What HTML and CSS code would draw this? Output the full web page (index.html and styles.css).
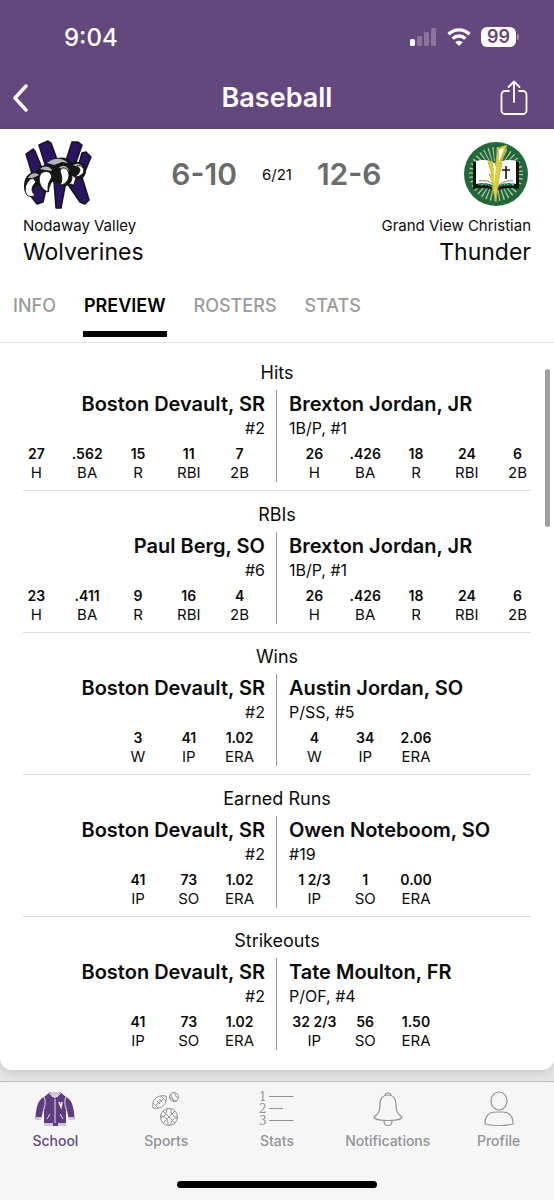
FILE: index.html
```
<!DOCTYPE html>
<html lang="en">
<head>
    <meta charset="UTF-8">
    <meta name="viewport" content="width=device-width, initial-scale=1.0">
    <title>Baseball</title>
    <link rel="stylesheet" href="styles.css">
</head>
<body>
    <header class="top">
        <div class="status">
            <span class="time">9:04</span>
            <div class="status-icons">
                <svg width="27" height="18" viewBox="0 0 27 18" fill="#fff">
                    <rect x="0" y="11" width="5" height="7" rx="1.5"/>
                    <g opacity=".25">
                        <rect x="7" y="8" width="5" height="10" rx="1.5"/>
                        <rect x="14" y="4" width="5" height="14" rx="1.5"/>
                        <rect x="21" y="0" width="5" height="18" rx="1.5"/>
                    </g>
                </svg>
                <svg width="24" height="18" viewBox="0 0 24 18">
                    <g fill="none" stroke="#fff" stroke-width="3.4">
                        <path d="M1.5 6.2a15 15 0 0 1 21 0"/>
                        <path d="M5.6 10.6a9.2 9.2 0 0 1 12.8 0"/>
                    </g>
                    <path fill="#fff" d="M12 18l-3.8-3.7a5.5 5.5 0 0 1 7.6 0z"/>
                </svg>
                <span class="battery">99</span>
            </div>
        </div>
        <div class="bar">
            <button class="icon-button" aria-label="Back">
                <svg width="17" height="28" viewBox="0 0 17 28" fill="none" stroke="#fff" stroke-width="3.4" stroke-linecap="round" stroke-linejoin="round"><path d="M14 2L3 14l11 12"/></svg>
            </button>
            <h1>Baseball</h1>
            <button class="icon-button" aria-label="Share">
                <svg width="28" height="36" viewBox="0 0 28 36" fill="none" stroke="#fff" stroke-width="1.8" stroke-linecap="round" stroke-linejoin="round"><path d="M9 11H5a3.5 3.5 0 0 0-3.5 3.5v16A3.5 3.5 0 0 0 5 34h18a3.5 3.5 0 0 0 3.5-3.5v-16A3.5 3.5 0 0 0 23 11h-4M14 22V1.5M8.5 7L14 1.5 19.5 7"/></svg>
            </button>
        </div>
    </header>

    <main>
        <div class="card">
            <div class="game">
                <div class="team">
                    <svg class="logo" viewBox="0 0 70 70" role="img" aria-label="Wolverines logo">
                        <g fill="#2b1460" stroke="#17131d" stroke-width="1.5" stroke-linejoin="round">
                            <path d="M3 15l7-5 2 2 8 20-10 6z"/>
                            <path d="M16 6l9-4 3 2 8 22-12 6z"/>
                            <path d="M49 3h6l4 3-7 20-11 2z"/>
                            <path d="M59 14l4-1 5 5-8 19-8 2z"/>
                            <path d="M9 46h15l-4 17-6 2-7-9z"/>
                            <path d="M31 42h12l-5 27h-5z"/>
                            <path d="M44 44l14-9 8 26-4 4-5-2z"/>
                        </g>
                        <path d="M1 47c0-8 4-14 12-14 2-5 6-7 10-7 7-8 20-11 26-2 7-3 14 0 14 8 0 5-4 9-9 8l-4-3-3 8c-3 3-8 3-11-1l-7-1c-2 3-3 7-3 10-5 0-9-3-11-7-3 2-5 4-5 8l-4 3c-4-2-5-6-5-10z" fill="#151517"/>
                        <path d="M24 24c6-5 15-6 21 0l-6-1-8 3zM5 39c2-5 8-6 11-3l-6 3zM17 30c4-4 11-3 12 2l-7-1zM36 29c4-5 10-1 10 4l-5-3zM50 26c5-3 10 0 11 5l-6-3z" fill="#b3b3b7"/>
                        <g fill="#fff" stroke="#151515" stroke-width="1">
                            <path d="M10 39C3 41 0 51 4 56c2 2 6 2 8 0-5-4-3-9 1-13z"/>
                            <path d="M20 33c-6 3-5 16 5 20 0-6 0-9 3-13 2-5-2-9-8-7z"/>
                            <path d="M38 30c-3 3 4 8-1 16 7 0 11-8 8-14-2-3-5-4-7-2z"/>
                            <path d="M54 27c5 3 3 7-2 11 6 0 11-5 8-9-1-2-4-3-6-2z"/>
                            <path d="M49 36c0 5-1 8-4 10l4-1 1 3 3-9z"/>
                        </g>
                    </svg>
                    <span class="school">Nodaway Valley</span>
                    <span class="mascot">Wolverines</span>
                </div>
                <div class="records">
                    <strong>6-10</strong>
                    <span>6/21</span>
                    <strong>12-6</strong>
                </div>
                <div class="team away">
                    <svg class="logo" viewBox="0 0 70 70" role="img" aria-label="Thunder logo">
                        <circle cx="35" cy="35" r="32" fill="#22683a"/>
                        <circle cx="35" cy="35" r="20" fill="none" stroke="#b5cda8" stroke-width="14" stroke-dasharray="1 2.49"/>
                        <path d="M12 23h5v24c7-2 13 0 18 3 5-3 11-5 18-3V23h5v27c-9-2-16-1-20 1h-6c-4-2-11-3-20-1z" fill="#101512"/>
                        <path d="M15 22c7-2 14-1 20 3 6-4 13-5 20-3v23c-7-2-14-1-20 3-6-4-13-5-20-3z" fill="#fff"/>
                        <path d="M18 42c6-1 11 0 15 4M38 46c4-3 9-5 14-4" fill="none" stroke="#777"/>
                        <path d="M45 27v13M41 31h8" stroke="#151515" stroke-width="1.6"/>
                        <path d="M37 9l9-3-7 19 2-1-3 14-3 25-4-16 2 1-5-13 3 1-4-13 4-1 1 8 2-1z" fill="#ddcf42" stroke="#c4ae2c" stroke-width=".8"/>
                        <path d="M38 11l5-2-5 14zM33 28l2-1-2 18z" fill="#fff"/>
                    </svg>
                    <span class="school">Grand View Christian</span>
                    <span class="mascot">Thunder</span>
                </div>
            </div>

            <nav class="tabs">
                <a href="#">INFO</a>
                <a href="#" class="active">PREVIEW</a>
                <a href="#">ROSTERS</a>
                <a href="#">STATS</a>
            </nav>

            <div class="leaders">
                <div class="scrollbar"></div>

                <section>
                    <h2>Hits</h2>
                    <div class="matchup">
                        <div class="player home">
                            <h3>Boston Devault, SR</h3>
                            <p>#2</p>
                            <table>
                                <tr><td>27</td><td>.562</td><td>15</td><td>11</td><td>7</td></tr>
                                <tr><th>H</th><th>BA</th><th>R</th><th>RBI</th><th>2B</th></tr>
                            </table>
                        </div>
                        <div class="player">
                            <h3>Brexton Jordan, JR</h3>
                            <p>1B/P, #1</p>
                            <table>
                                <tr><td>26</td><td>.426</td><td>18</td><td>24</td><td>6</td></tr>
                                <tr><th>H</th><th>BA</th><th>R</th><th>RBI</th><th>2B</th></tr>
                            </table>
                        </div>
                    </div>
                </section>

                <section>
                    <h2>RBIs</h2>
                    <div class="matchup">
                        <div class="player home">
                            <h3>Paul Berg, SO</h3>
                            <p>#6</p>
                            <table>
                                <tr><td>23</td><td>.411</td><td>9</td><td>16</td><td>4</td></tr>
                                <tr><th>H</th><th>BA</th><th>R</th><th>RBI</th><th>2B</th></tr>
                            </table>
                        </div>
                        <div class="player">
                            <h3>Brexton Jordan, JR</h3>
                            <p>1B/P, #1</p>
                            <table>
                                <tr><td>26</td><td>.426</td><td>18</td><td>24</td><td>6</td></tr>
                                <tr><th>H</th><th>BA</th><th>R</th><th>RBI</th><th>2B</th></tr>
                            </table>
                        </div>
                    </div>
                </section>

                <section>
                    <h2>Wins</h2>
                    <div class="matchup">
                        <div class="player home">
                            <h3>Boston Devault, SR</h3>
                            <p>#2</p>
                            <table class="three">
                                <tr><td>3</td><td>41</td><td>1.02</td></tr>
                                <tr><th>W</th><th>IP</th><th>ERA</th></tr>
                            </table>
                        </div>
                        <div class="player">
                            <h3>Austin Jordan, SO</h3>
                            <p>P/SS, #5</p>
                            <table class="three">
                                <tr><td>4</td><td>34</td><td>2.06</td></tr>
                                <tr><th>W</th><th>IP</th><th>ERA</th></tr>
                            </table>
                        </div>
                    </div>
                </section>

                <section>
                    <h2>Earned Runs</h2>
                    <div class="matchup">
                        <div class="player home">
                            <h3>Boston Devault, SR</h3>
                            <p>#2</p>
                            <table class="three">
                                <tr><td>41</td><td>73</td><td>1.02</td></tr>
                                <tr><th>IP</th><th>SO</th><th>ERA</th></tr>
                            </table>
                        </div>
                        <div class="player">
                            <h3>Owen Noteboom, SO</h3>
                            <p>#19</p>
                            <table class="three">
                                <tr><td>1 2/3</td><td>1</td><td>0.00</td></tr>
                                <tr><th>IP</th><th>SO</th><th>ERA</th></tr>
                            </table>
                        </div>
                    </div>
                </section>

                <section>
                    <h2>Strikeouts</h2>
                    <div class="matchup">
                        <div class="player home">
                            <h3>Boston Devault, SR</h3>
                            <p>#2</p>
                            <table class="three">
                                <tr><td>41</td><td>73</td><td>1.02</td></tr>
                                <tr><th>IP</th><th>SO</th><th>ERA</th></tr>
                            </table>
                        </div>
                        <div class="player">
                            <h3>Tate Moulton, FR</h3>
                            <p>P/OF, #4</p>
                            <table class="three">
                                <tr><td>32 2/3</td><td>56</td><td>1.50</td></tr>
                                <tr><th>IP</th><th>SO</th><th>ERA</th></tr>
                            </table>
                        </div>
                    </div>
                </section>
            </div>
        </div>
    </main>

    <footer>
        <nav class="bottom-nav">
            <a href="#" class="active">
                <svg width="40" height="36" viewBox="0 0 40 36">
                    <path d="M15 1h10l6 5c5 2 8 8 8.500 22h-5.500l-3-12v16H9V16L6 28H.5C1 14 4 8 9 6z" fill="#5f3b80"/>
                    <path d="M15 1h10l-2 5h-6zM9 32h9v3H9zM23 32h8v3h-8zM1 26h5v3H1zM34 26h5v3h-5z" fill="#d0c4da"/>
                    <path d="M18 31h5v4h-5z" fill="#5f3b80"/>
                    <path d="M9 6c2 4 1 8 0 12M31 6c-2 4-1 8 0 12M14 2l6 5 6-5M20 8v24M12 28l3-5M28 28l-3-5" fill="none" stroke="#e7e0ec"/>
                    <path d="M24 11l2 5 1-5" fill="none" stroke="#fff" stroke-width="1.5"/>
                </svg>
                School
            </a>
            <a href="#">
                <svg width="40" height="36" viewBox="0 0 40 36" fill="none" stroke="#929297">
                    <path d="M7 17C5 10 11 3 20 5c2 7-4 14-13 12zM10 14l7-6M11 10l3 3M13 8l3 3M7 12l5 5M15 5l5 5"/>
                    <circle cx="28" cy="6" r="4.5"/>
                    <path d="M25 3c0 4 3 7 6 7M29 2c0 2 1 4 3 5M24 7c2 0 4 2 4 4"/>
                    <circle cx="23" cy="26" r="8.5"/>
                    <path d="M17 20l12 12M29 20L17 32M21 18c-1 6-3 8-6 9M25 18c-1 4 2 8 6 8M15 25c5 0 7 4 7 9M31 27c-4 0-6 3-6 7"/>
                </svg>
                Sports
            </a>
            <a href="#">
                <svg width="40" height="36" viewBox="0 0 40 36" stroke="#929297">
                    <g class="rank" stroke="none">
                        <text x="2" y="10">1</text>
                        <text x="2" y="22">2</text>
                        <text x="2" y="34">3</text>
                    </g>
                    <path d="M12 5.5h24.5M12 17.5h14M12 29.5h24.5"/>
                </svg>
                Stats
            </a>
            <a href="#">
                <svg width="40" height="36" viewBox="0 0 40 36" fill="none" stroke="#929297" stroke-width="1.2">
                    <path d="M17 5c0-4 6-4 6 0M6 26c4-3 6-5 6-12 0-7 3-10 8-10s8 3 8 10c0 7 2 9 6 12 0 2-6 3.5-14 3.5S6 28 6 26zM16 30c0 6 8 6 8 0"/>
                </svg>
                Notifications
            </a>
            <a href="#">
                <svg width="40" height="36" viewBox="0 0 40 36" fill="none" stroke="#929297" stroke-width="1.2">
                    <ellipse cx="20" cy="10" rx="8" ry="9"/>
                    <path d="M6 33c0-8 4-12 11-12h6c7 0 11 4 11 12-8 2-20 2-28 0z"/>
                </svg>
                Profile
            </a>
        </nav>
        <div class="home-indicator"></div>
    </footer>
</body>
</html>
```
FILE: styles.css
```
* {
    box-sizing: border-box;
}
body {
    font-family: Inter, "Liberation Sans", sans-serif;
    margin: 0;
    min-height: 100vh;
    display: flex;
    flex-direction: column;
    background-color: #e6e6e6;
    color: #0b0b0b;
}
a {
    text-decoration: none;
}
svg {
    display: block;
}

/* Purple header */
.top {
    background-color: #64477d;
    color: white;
}
.status {
    display: flex;
    justify-content: space-between;
    align-items: center;
    height: 66px;
    padding: 8px 38px 0 64px;
}
.time {
    font-size: 24px;
    font-weight: 500;
}
.status-icons {
    display: flex;
    align-items: center;
    gap: 10px;
}
.battery {
    position: relative;
    width: 35px;
    height: 20px;
    border-radius: 6px;
    background: white;
    color: #64477d;
    font-size: 18px;
    font-weight: 600;
    line-height: 20px;
    text-align: center;
}
.battery::after {
    content: "";
    position: absolute;
    left: 36px;
    top: 7px;
    width: 2px;
    height: 6px;
    border-radius: 0 2px 2px 0;
    background: #a08fae;
}
.bar {
    display: flex;
    justify-content: space-between;
    align-items: center;
    height: 63px;
    padding: 0 26px 0 12px;
}
.bar h1 {
    margin: 0 0 0 14px;
    font-size: 27px;
    font-weight: 600;
}
.icon-button {
    display: flex;
    width: 28px;
    padding: 0;
    border: none;
    background: none;
    cursor: pointer;
}

/* Teams and records */
.card {
    background: white;
    border-radius: 0 0 12px 12px;
    box-shadow: 0 2px 12px rgba(0, 0, 0, 0.15);
}
.game {
    display: grid;
    grid-template-columns: 1fr auto 1fr;
    padding: 10px 23px 0;
}
.team {
    display: flex;
    flex-direction: column;
    white-space: nowrap;
}
.away {
    align-items: flex-end;
}
.logo {
    width: 70px;
    height: 70px;
}
.school {
    margin-top: 7px;
    font-size: 15px;
    line-height: 20px;
}
.mascot {
    font-size: 23px;
    line-height: 32px;
}
.records {
    display: flex;
    align-items: center;
    gap: 25px;
    height: 70px;
    font-size: 15px;
}
.records strong {
    color: #6b6b6b;
    font-size: 30px;
    font-weight: 600;
}

.tabs {
    display: flex;
    gap: 26px;
    padding: 26px 12px 5px;
    border-bottom: 1px solid #e6e6ea;
}
.tabs a {
    padding: 0 1px 13px;
    border-bottom: 6px solid transparent;
    color: #9b9b9b;
    font-size: 18px;
    font-weight: 500;
    line-height: 24px;
}
.tabs .active {
    border-color: black;
    color: black;
    font-weight: 600;
}

/* Stat leaders */
.leaders {
    position: relative;
    padding: 6px 0 11px;
}
.scrollbar {
    position: absolute;
    top: 26px;
    right: 4px;
    width: 5px;
    height: 158px;
    border-radius: 3px;
    background: #a0a0a0;
}
section {
    padding-top: 13px;
}
section::after {
    content: "";
    display: block;
    margin: 8px 23px 0;
    border-bottom: 1px solid #dcdcdc;
}
section:last-child::after {
    border-color: transparent;
}
h2 {
    margin: 0 0 6px;
    font-size: 18px;
    font-weight: 400;
    line-height: 22px;
    text-align: center;
}
.matchup {
    display: grid;
    grid-template-columns: 1fr 1fr;
}
.player {
    padding: 0 11px 0 12px;
}
.home {
    padding: 0 11px;
    border-right: 1px solid #999;
    text-align: right;
}
.player h3 {
    margin: 0;
    font-size: 20px;
    font-weight: 600;
    line-height: 28px;
}
.player p {
    margin: 0 0 7px;
    font-size: 16px;
    line-height: 20px;
}
table {
    width: 100%;
    table-layout: fixed;
    border-collapse: collapse;
}
.three {
    width: 60%;
}
.home .three {
    margin-left: auto;
}
td,
th {
    padding: 0;
    line-height: 18px;
    text-align: center;
    white-space: nowrap;
}
td {
    font-size: 14px;
    font-weight: 600;
}
th {
    padding-top: 1px;
    font-size: 15px;
    font-weight: 400;
}

/* Bottom navigation */
footer {
    margin-top: auto;
    background: #f6f6f7;
    border-top: 1px solid #bdbdbf;
}
.bottom-nav {
    display: grid;
    grid-template-columns: repeat(5, 1fr);
    padding-top: 9px;
}
.bottom-nav a {
    display: flex;
    flex-direction: column;
    align-items: center;
    gap: 5px;
    color: #929297;
    font-size: 14px;
    font-weight: 500;
    line-height: 18px;
}
.bottom-nav .active {
    color: #64477d;
}
.rank {
    fill: #929297;
    font-family: "DejaVu Serif", serif;
    font-size: 12px;
}
.home-indicator {
    width: 36%;
    height: 7px;
    margin: 31px auto 12px;
    border-radius: 4px;
    background: black;
}
```
